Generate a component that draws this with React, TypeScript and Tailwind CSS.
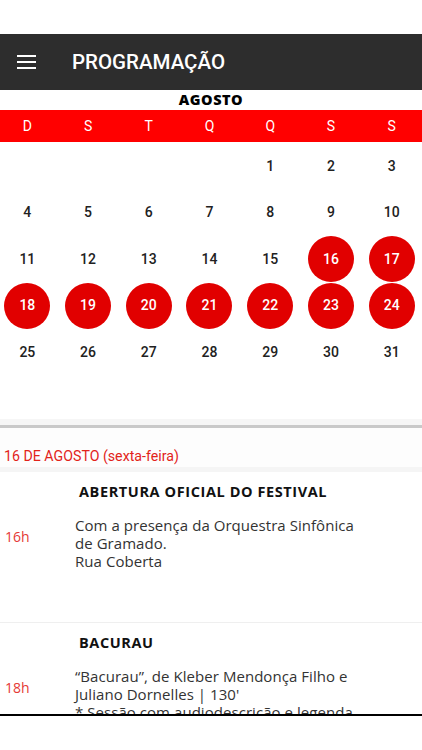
import { Fragment } from 'react';

const weekDays = ['D', 'S', 'T', 'Q', 'Q', 'S', 'S'];

// August: first day falls on Thursday (index 4)
const days: (number | null)[] = [null, null, null, null, ...Array.from({ length: 31 }, (_, i) => i + 1)];
const festivalDays = [16, 17, 18, 19, 20, 21, 22, 23, 24];

const events = [
  {
    time: '16h',
    title: 'ABERTURA OFICIAL DO FESTIVAL',
    lines: ['Com a presença da Orquestra Sinfônica', 'de Gramado.', 'Rua Coberta'],
  },
  {
    time: '18h',
    title: 'BACURAU',
    lines: [
      '“Bacurau”, de Kleber Mendonça Filho e',
      'Juliano Dornelles | 130\'',
      '* Sessão com audiodescrição e legenda',
      'descritiva',
    ],
  },
];

function Hamburger() {
  return (
    <div className="flex w-[19px] flex-col gap-[4px]">
      <span className="h-[2px] w-full bg-white" />
      <span className="h-[2px] w-full bg-white" />
      <span className="h-[2px] w-full bg-white" />
    </div>
  );
}

export default function App() {
  return (
    <div className="flex h-[750px] w-[422px] flex-col overflow-hidden bg-white font-['Roboto',sans-serif]">
      {/* status bar space */}
      <div className="h-[34px] shrink-0 bg-white" />

      {/* App bar */}
      <div className="flex h-[56px] shrink-0 items-center bg-[#2d2d2d] pl-[17px]">
        <Hamburger />
        <h1 className="ml-[36px] text-[20.5px] font-medium text-white">PROGRAMAÇÃO</h1>
      </div>

      <div className="flex h-[624px] shrink-0 flex-col overflow-hidden">
        {/* Month */}
        <div className="flex h-[20px] shrink-0 items-center justify-center font-['Open_Sans',sans-serif] text-[14.5px] font-extrabold tracking-[0.5px] text-black">
          AGOSTO
        </div>

        {/* Weekday bar */}
        <div className="-ml-[3px] grid h-[32px] w-[425px] shrink-0 grid-cols-7 items-center bg-[#ff0000] text-[14px] text-white">
          {weekDays.map((d, i) => (
            <span key={i} className="text-center">
              {d}
            </span>
          ))}
        </div>

        {/* Calendar */}
        <div className="-ml-[3px] mt-[1px] grid w-[425px] shrink-0 grid-cols-7 auto-rows-[46.5px]">
          {days.map((d, i) => (
            <div key={i} className="flex items-center justify-center">
              {d !== null &&
                (festivalDays.includes(d) ? (
                  <span className="flex h-[46px] w-[46px] items-center justify-center rounded-full bg-[#e10000] text-[14px] font-medium text-white">
                    {d}
                  </span>
                ) : (
                  <span className="text-[14px] font-medium text-[#212121]">{d}</span>
                ))}
            </div>
          ))}
        </div>

        <div className="h-[43px] shrink-0" />
        <div className="h-[6px] shrink-0 bg-[#f6f6f6]" />
        <div className="h-[3px] shrink-0 bg-[#c9c9c9]" />

        {/* Day label */}
        <div className="flex h-[39px] shrink-0 items-center bg-[#fdfdfd] pl-[4px] pt-[20px] text-[14.2px] text-[#e2231a]">
          16 DE AGOSTO (sexta-feira)
        </div>
        <div className="h-[5px] shrink-0 bg-[#f5f5f5]" />

        {/* Events */}
        {events.map((ev, idx) => (
          <Fragment key={idx}>
            <div className="flex h-[151px] shrink-0 flex-col border-b border-[#efefef] pt-[10px] font-['Open_Sans',sans-serif]">
              <h2 className="ml-[79px] text-[14.5px] font-bold leading-[20px] tracking-[0.6px] text-[#111]">{ev.title}</h2>
              <div className="mt-[14px] flex">
                <span className="mt-[12px] w-[75px] pl-[5px] text-[14px] leading-[18px] text-[#e53935]">{ev.time}</span>
                <p className="text-[15px] leading-[18px] tracking-[0.05px] text-[#333]">
                  {ev.lines.map((l, j) => (
                    <span key={j} className="block">
                      {l}
                    </span>
                  ))}
                </p>
              </div>
            </div>
          </Fragment>
        ))}
      </div>

      <div className="h-[2px] shrink-0 bg-black" />
      <div className="flex-1 bg-white" />
    </div>
  );
}
